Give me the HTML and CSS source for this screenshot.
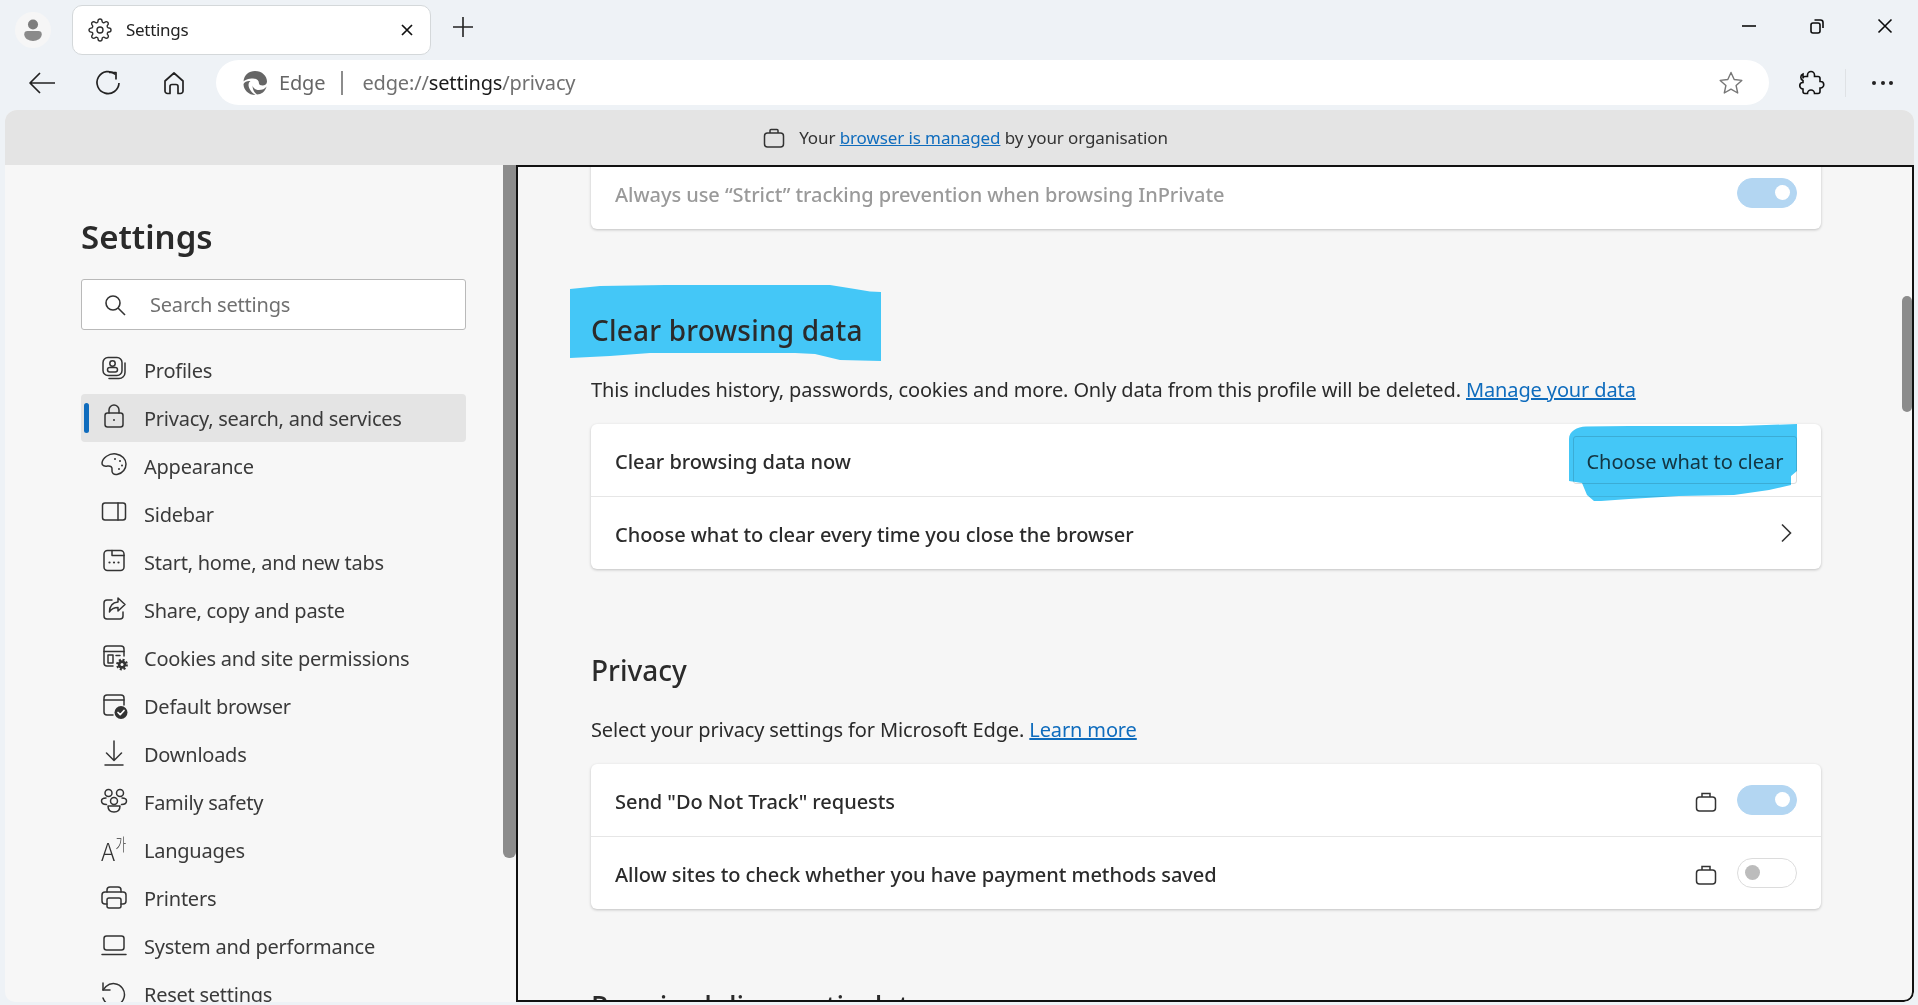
FILE: index.html
```html
<!DOCTYPE html>
<html lang="en">
<head>
  <meta charset="UTF-8">
  <title>Settings</title>
  <link rel="stylesheet" href="styles.css">
</head>
<body>
  <div class="tabstrip">
    <div class="avatar">
      <svg width="22" height="24" viewBox="0 0 20 22"><circle cx="10" cy="6" r="4.600" fill="#7d7d7d"/><path d="M2 15a3 3 0 0 1 3-3h10a3 3 0 0 1 3 3c0 4-4 6-8 6s-8-2-8-6z" fill="#8a8a8a"/></svg>
    </div>
    <div class="tab">
      <svg class="tab-gear" width="24" height="24" viewBox="0 0 24 24"><circle cx="12" cy="12" r="3"/><path d="M19.4 15a1.65 1.65 0 0 0 .33 1.82l.06.06a2 2 0 0 1 0 2.83 2 2 0 0 1-2.83 0l-.06-.06a1.65 1.65 0 0 0-1.82-.33 1.65 1.65 0 0 0-1 1.51V21a2 2 0 0 1-2 2 2 2 0 0 1-2-2v-.09A1.65 1.65 0 0 0 9 19.4a1.65 1.65 0 0 0-1.82.33l-.06.06a2 2 0 0 1-2.83 0 2 2 0 0 1 0-2.83l.06-.06a1.65 1.65 0 0 0 .33-1.82 1.65 1.65 0 0 0-1.51-1H3a2 2 0 0 1-2-2 2 2 0 0 1 2-2h.09A1.65 1.65 0 0 0 4.6 9a1.65 1.65 0 0 0-.33-1.82l-.06-.06a2 2 0 0 1 0-2.83 2 2 0 0 1 2.83 0l.06.06a1.65 1.65 0 0 0 1.82.33H9a1.65 1.65 0 0 0 1-1.51V3a2 2 0 0 1 2-2 2 2 0 0 1 2 2v.09a1.65 1.65 0 0 0 1 1.51 1.65 1.65 0 0 0 1.82-.33l.06-.06a2 2 0 0 1 2.83 0 2 2 0 0 1 0 2.83l-.06.06a1.65 1.65 0 0 0-.33 1.82V9a1.65 1.65 0 0 0 1.51 1H21a2 2 0 0 1 2 2 2 2 0 0 1-2 2h-.09a1.65 1.65 0 0 0-1.51 1z"/></svg>
      <span class="tab-title">Settings</span>
      <svg class="tab-close" width="12" height="12" viewBox="0 0 12 12"><path d="M1 1l10 10M11 1L1 11"/></svg>
    </div>
    <svg class="new-tab" width="24" height="24" viewBox="0 0 24 24"><path d="M12 2v20M2 12h20"/></svg>
    <div class="win-controls">
      <div class="win-btn"><svg width="16" height="16" viewBox="0 0 16 16"><path d="M1 8h14"/></svg></div>
      <div class="win-btn"><svg width="16" height="16" viewBox="0 0 16 16"><rect x="2" y="5" width="9" height="10" rx="2"/><path d="M5.500 2h6A2.500 2.500 0 0 1 14 4.500V10"/></svg></div>
      <div class="win-btn"><svg width="16" height="16" viewBox="0 0 16 16"><path d="M1.500 1.500l13 13M14.500 1.500l-13 13"/></svg></div>
    </div>
  </div>

  <div class="toolbar">
    <div class="nav-btn"><svg width="28" height="28" viewBox="0 0 28 28"><path d="M27 14H2M12 4L2 14l10 10"/></svg></div>
    <div class="nav-btn"><svg width="28" height="28" viewBox="0 0 28 28"><path d="M21.500 5.500A11 11 0 1 0 25 14"/><path d="M15 3.500h7v7"/></svg></div>
    <div class="nav-btn"><svg width="26" height="26" viewBox="0 0 26 26"><path d="M4 11l9-8 9 8v10a2.500 2.500 0 0 1-2.500 2.500H17v-7a2 2 0 0 0-2-2h-4a2 2 0 0 0-2 2v7H6.500A2.500 2.500 0 0 1 4 21z"/></svg></div>
    <div class="address">
      <svg class="edge-logo" width="24" height="24" viewBox="0 0 24 24"><path d="M.5 10.500C1 4 6 0 12 0c7 0 12 5 12 10.500 0 2.500-2 4-4.500 4-2 0-3.500-1-3.500-2 0-3-2.500-5-6-5-4.500 0-8.500 1.500-9.500 3z"/><path d="M.5 13c1-2.500 4.500-3.500 7-3-2.500 1.500-2.500 5-.5 8.500 1 2 3 4 5.500 5.500C5.500 24 .5 19 .5 13z"/><path d="M9.500 14.500c.5 2.500 3 4.500 6.500 4.500 3 0 6-1 7.500-3.500-1 5-5.500 8-9.500 8-3-2-4.500-5.500-4.500-9z"/></svg>
      <span class="addr-label">Edge</span>
      <span class="addr-sep"></span>
      <span class="addr-url">edge://<b>settings</b>/privacy</span>
      <svg class="star" width="26" height="26" viewBox="0 0 26 26"><path d="M13 2.500l3.200 7 7.600.9-5.700 5.100 1.600 7.500-6.700-3.800-6.700 3.800 1.600-7.500-5.700-5.100 7.600-.9z"/></svg>
    </div>
    <div class="toolbar-right">
      <svg class="puzzle" width="28" height="28" viewBox="0 0 28 28"><path d="M10.500 6a3.500 3.500 0 0 1 7 0v1.500H21a2 2 0 0 1 2 2v3h.5a3.200 3.200 0 0 1 0 6.500H23v3.500a2 2 0 0 1-2 2h-3.500a3.500 3.500 0 0 0-7 0H8a2 2 0 0 1-2-2v-2.500a3.200 3.200 0 0 1 0-6.500v-2a3.500 3.500 0 0 1 0-6.500V9.500a2 2 0 0 1 2-2h2.500z"/></svg>
      <span class="tool-sep"></span>
      <div class="dots"><i></i><i></i><i></i></div>
    </div>
  </div>

  <div class="window">
    <div class="banner">
      <svg class="case case-dark" width="22" height="22" viewBox="0 0 22 22"><rect x="1.500" y="6" width="19" height="14" rx="3"/><path d="M7 6V3.500A1 1 0 0 1 8 2.500h6a1 1 0 0 1 1 1V6"/></svg>
      <span>Your <a href="#">browser is managed</a> by your organisation</span>
    </div>
    <div class="content">
      <aside class="sidebar">
        <h2 class="side-title">Settings</h2>
        <div class="search">
          <svg width="24" height="24" viewBox="0 0 24 24"><circle cx="10" cy="10" r="7"/><path d="M15 15l7 7"/></svg>
          <span>Search settings</span>
        </div>
        <nav class="menu">
          <a class="menu-item"><svg class="ico" viewBox="0 0 28 28"><rect x="3" y="1.500" width="19" height="18" rx="5"/><circle cx="12.500" cy="7.500" r="2.700"/><rect x="7.500" y="11.500" width="10" height="4.500" rx="2.200"/><path d="M25 7v9.500a6 6 0 0 1-6 6H9"/></svg><span>Profiles</span></a>
          <a class="menu-item active"><svg class="ico" viewBox="0 0 28 28"><rect x="5" y="9" width="18" height="14" rx="2.500"/><path d="M9 9V6a5 5 0 0 1 10 0v3"/><circle cx="14" cy="16" r="1" class="solid"/></svg><span>Privacy, search, and services</span></a>
          <a class="menu-item"><svg class="ico" viewBox="0 0 28 28"><path d="M16 2C9 1 2.500 6 2 11c-.3 3 3 3.500 5.500 3 3-.5 5 1 4.500 4-.4 3 1.500 5 5 4.500 6-1 9-6 9-10.500C26 7 22 3 16 2z"/><circle cx="15" cy="7" r="1" class="solid"/><circle cx="20" cy="9" r="1" class="solid"/><circle cx="22" cy="13.500" r="1" class="solid"/><circle cx="19" cy="17" r="1" class="solid"/></svg><span>Appearance</span></a>
          <a class="menu-item"><svg class="ico" viewBox="0 0 28 28"><rect x="2.500" y="3" width="23" height="17" rx="2.500"/><path d="M18 3v17"/></svg><span>Sidebar</span></a>
          <a class="menu-item"><svg class="ico" viewBox="0 0 28 28"><rect x="4" y="2.500" width="20" height="20" rx="3.500"/><path d="M12 2.500V7.500h12"/><circle cx="9.500" cy="14.500" r="1.100" class="solid"/><circle cx="14" cy="14.500" r="1.100" class="solid"/><circle cx="18.500" cy="14.500" r="1.100" class="solid"/></svg><span>Start, home, and new tabs</span></a>
          <a class="menu-item"><svg class="ico" viewBox="0 0 28 28"><path d="M12 4H7a3 3 0 0 0-3 3v13a3 3 0 0 0 3 3h13a3 3 0 0 0 3-3v-4"/><path d="M18 2l7 6.500L18 15v-3.500c-4 0-6.500 1-8.500 4.500 0-6 3-9.500 8.500-10z"/></svg><span>Share, copy and paste</span></a>
          <a class="menu-item"><svg class="ico" viewBox="0 0 28 28"><path d="M13 22H7a3 3 0 0 1-3-3V5a3 3 0 0 1 3-3h14a3 3 0 0 1 3 3v7"/><path d="M4 7.500h20"/><rect x="8" y="11" width="5" height="8"/><path d="M16 11.500h4"/><circle cx="22" cy="20.500" r="4.800" class="cog" stroke-dasharray="2 1.770"/><circle cx="22" cy="20.500" r="4.200" class="solid"/><circle cx="22" cy="20.500" r="1.500" class="white"/></svg><span>Cookies and site permissions</span></a>
          <a class="menu-item"><svg class="ico" viewBox="0 0 28 28"><path d="M13 23H7a3 3 0 0 1-3-3V6a3 3 0 0 1 3-3h14a3 3 0 0 1 3 3v7"/><path d="M4 8h20"/><circle cx="21" cy="20.500" r="6.500" class="solid"/><path d="M18 20.500l2.200 2.200 3.800-4.200" class="white-line"/></svg><span>Default browser</span></a>
          <a class="menu-item"><svg class="ico" viewBox="0 0 28 28"><path d="M14 1v19M6.500 13l7.500 7.500 7.500-7.500M5 25h18"/></svg><span>Downloads</span></a>
          <a class="menu-item"><svg class="ico" viewBox="0 0 28 28"><circle cx="8.500" cy="5" r="3.500"/><circle cx="20" cy="5" r="3.500"/><circle cx="14" cy="13" r="3.500"/><path d="M6 10c-3 0-4.500 1.500-4.500 3 0 2 2 3.500 5 3.500M22 10c3 0 4.500 1.500 4.500 3 0 2-2 3.500-5 3.500M8 18h12c0 4-2.500 6-6 6s-6-2-6-6z"/></svg><span>Family safety</span></a>
          <a class="menu-item"><svg class="ico" viewBox="0 0 28 28"><text x="1" y="25" class="ico-a">A</text><text transform="translate(15.500 15) scale(.68 1)" class="ico-k">가</text></svg><span>Languages</span></a>
          <a class="menu-item"><svg class="ico" viewBox="0 0 28 28"><path d="M7 8V6a3 3 0 0 1 3-3h8a3 3 0 0 1 3 3v2"/><path d="M7 20H5a3 3 0 0 1-3-3v-6a3 3 0 0 1 3-3h18a3 3 0 0 1 3 3v6a3 3 0 0 1-3 3h-2"/><rect x="7" y="14" width="14" height="10" rx="2"/></svg><span>Printers</span></a>
          <a class="menu-item"><svg class="ico" viewBox="0 0 28 28"><rect x="4" y="4" width="20" height="14" rx="2.500"/><path d="M2 22.500h24"/></svg><span>System and performance</span></a>
          <a class="menu-item"><svg class="ico" viewBox="0 0 28 28"><path d="M3 18a11 11 0 1 0 3-11.500L3 10"/><path d="M3 3v7h7"/></svg><span>Reset settings</span></a>
        </nav>
      </aside>
      <div class="side-scroll"><div class="side-thumb"></div></div>

      <main class="main">
        <div class="main-thumb"></div>
        <div class="card card-first">
          <div class="row">
            <span class="disabled">Always use “Strict” tracking prevention when browsing InPrivate</span>
            <div class="toggle on"></div>
          </div>
        </div>

        <div class="hl-wrap">
          <svg class="hl-heading" width="311" height="76" viewBox="0 0 311 76"><path d="M0 4L30 1L95 0H260L285 4L300 6.500L311 7V76L270 75L245 69L225 68H80L40 71L0 73z"/></svg>
          <h1 class="section-big">Clear browsing data</h1>
        </div>
        <p class="desc desc-first">This includes history, passwords, cookies and more. Only data from this profile will be deleted. <a href="#">Manage your data</a></p>
        <div class="card">
          <div class="row">
            <span>Clear browsing data now</span>
            <button class="btn">Choose what to clear</button>
          </div>
          <div class="row row-line">
            <span>Choose what to clear every time you close the browser</span>
            <svg class="chevron" width="12" height="20" viewBox="0 0 12 20"><path d="M2 1.500l8.500 8.500L2 18.500"/></svg>
          </div>
          <svg class="hl-button" width="228" height="78" viewBox="0 0 228 78"><path d="M0 15C0 7 8 3 17 2.500L60 2H170L228 0V47L222 52V61L200 66L165 71L110 72L60 75L32 77L25 77L18 71L13 59L0 57z"/></svg>
        </div>

        <h2 class="section">Privacy</h2>
        <p class="desc">Select your privacy settings for Microsoft Edge. <a href="#">Learn more</a></p>
        <div class="card">
          <div class="row">
            <span>Send "Do Not Track" requests</span>
            <svg class="case" width="22" height="22" viewBox="0 0 22 22"><rect x="1.500" y="6" width="19" height="14" rx="3"/><path d="M7 6V2.500h8V6"/></svg>
            <div class="toggle on"></div>
          </div>
          <div class="row row-line">
            <span>Allow sites to check whether you have payment methods saved</span>
            <svg class="case" width="22" height="22" viewBox="0 0 22 22"><rect x="1.500" y="6" width="19" height="14" rx="3"/><path d="M7 6V2.500h8V6"/></svg>
            <div class="toggle"></div>
          </div>
        </div>

        <h2 class="section section-last">Required diagnostic data</h2>
      </main>
    </div>
  </div>
</body>
</html>
```

FILE: styles.css
```css
* { box-sizing: border-box; }
html, body { height: 100%; }
body { margin: 0; background: #eef2f6; color: #2b2b2b; font-family: "Noto Sans", "Open Sans", sans-serif; display: flex; flex-direction: column; overflow: hidden; }
a { color: #0f6cbd; text-decoration: underline; }
svg { display: block; flex: none; fill: none; }

/* title bar */
.tabstrip { height: 60px; display: flex; align-items: center; flex: none; }
.avatar { width: 36px; height: 36px; margin-left: 15px; border-radius: 50%; background: #f6f6f6; display: flex; align-items: center; justify-content: center; }
.tab { width: 359px; height: 50px; margin-left: 21px; background: #fff; border: 1px solid #d4d8da; border-radius: 10px; display: flex; align-items: center; padding: 0 17px 0 15px; }
.tab-gear { stroke: #2e2e2e; stroke-width: 1.4; }
.tab-title { font-size: 17px; margin: 0 0 2px 14px; letter-spacing: -.3px; color: #222; }
.tab-close { margin-left: auto; stroke: #111; stroke-width: 1.7; }
.new-tab { margin-left: 20px; margin-bottom: 6px; stroke: #222; stroke-width: 1.6; }
.win-controls { margin-left: auto; margin-right: -1px; display: flex; margin-bottom: 8px; }
.win-btn { width: 68px; display: flex; justify-content: center; }
.win-btn svg { stroke: #0c0c0c; stroke-width: 1.6; }

/* toolbar */
.toolbar { height: 50px; display: flex; padding-left: 9px; flex: none; }
.nav-btn { width: 66px; height: 45px; display: flex; align-items: center; justify-content: center; }
.nav-btn svg { stroke: #222; stroke-width: 1.7; stroke-linejoin: round; }
.address { flex: 1; height: 45px; margin-left: 9px; background: #fff; border-radius: 23px; display: flex; align-items: center; padding: 0 25px 0 27px; font-size: 20px; letter-spacing: -.15px; }
.edge-logo { fill: #666; }
.addr-label { margin-left: 12px; color: #666; }
.addr-sep { width: 2px; height: 24px; background: #8c8c8c; margin: 0 19px 0 16px; }
.addr-url { color: #707070; }
.addr-url b { font-weight: 400; color: #1a1a1a; }
.star { margin-left: auto; stroke: #777; stroke-width: 1.4; stroke-linejoin: round; }
.toolbar-right { width: 149px; height: 45px; display: flex; align-items: center; padding-left: 28px; }
.puzzle { stroke: #111; stroke-width: 1.6; }
.tool-sep { width: 1px; height: 28px; background: #dfe2e5; margin: 0 26px 0 20px; }
.dots { display: flex; gap: 4.5px; }
.dots i { width: 4px; height: 4px; border-radius: 50%; background: #222; }

/* window */
.window { flex: 1; margin: 0 4px 3px 5px; background: #f7f7f7; border-radius: 12px 12px 10px 10px; display: flex; flex-direction: column; overflow: hidden; min-height: 0; }
.banner { height: 55px; flex: none; background: #e4e4e4; display: flex; align-items: center; justify-content: center; gap: 14px; font-size: 17px; letter-spacing: -.1px; color: #333; padding-left: 12px; }
.case { stroke: #333; stroke-width: 1.5; margin-right: 20px; margin-top: 4px; }
.case-dark { margin: 0; }
.content { flex: 1; display: flex; min-height: 0; }

/* sidebar */
.sidebar { width: 498px; padding: 50px 37px 0 76px; overflow: hidden; }
.side-title { margin: 0; font-size: 33px; line-height: 44px; font-weight: 600; color: #2a2a2a; }
.search { height: 51px; margin-top: 20px; background: #fff; border: 1px solid #b9b9b9; border-radius: 3px; display: flex; align-items: center; padding-left: 21px; gap: 23px; font-size: 20px; letter-spacing: -.2px; color: #707070; }
.search svg { stroke: #333; stroke-width: 1.6; }
.menu { margin-top: 16px; }
.menu-item { height: 48px; display: flex; align-items: center; position: relative; padding-left: 19px; gap: 16px; font-size: 20px; letter-spacing: -.25px; color: #3a3a3a; text-decoration: none; border-radius: 4px; }
.menu-item.active { background: #e4e4e4; }
.menu-item.active::before { content: ""; position: absolute; left: 3px; top: 9px; width: 5px; height: 30px; border-radius: 3px; background: #0f6cbd; }
.ico { width: 28px; height: 28px; overflow: visible; stroke: #333; stroke-width: 1.5; stroke-linecap: round; stroke-linejoin: round; }
.ico .solid { fill: #333; stroke: none; }
.ico .white { fill: #fff; stroke: none; }
.ico .white-line { stroke: #fff; stroke-width: 1.7; }
.ico .cog { stroke-width: 2.2; stroke-linecap: butt; }
.ico text { fill: #333; stroke: none; font-family: "Noto Sans CJK KR", sans-serif; font-weight: 300; }
.ico-a { font-size: 24px; }
.ico-k { font-size: 17px; }
.side-scroll { width: 13px; flex: none; }
.side-thumb { height: 693px; background: #8c8c8c; border-radius: 0 0 6px 6px; }

/* main panel */
.main { flex: 1; min-width: 0; position: relative; background: #f6f6f6; border: 2px solid #111; border-radius: 0 0 10px 0; padding-left: 73px; overflow: hidden; }
.main-thumb { position: absolute; right: 0; top: 129px; width: 10px; height: 116px; border-radius: 5px; background: #8c8c8c; }
.card { width: 1230px; background: #fff; border-radius: 6px; box-shadow: 0 1px 3px rgba(0,0,0,.22); position: relative; font-size: 20px; font-weight: 500; letter-spacing: -.05px; }
.card-first { margin-top: -10px; }
.row { height: 72px; display: flex; align-items: center; padding: 0 24px 0 24px; }
.row > span { margin-right: auto; margin-top: 3px; }
.row-line { height: 73px; border-top: 1px solid #e6e6e6; }
.disabled { color: #9a9a9a; }
.toggle { width: 60px; height: 30px; flex: none; border-radius: 15px; border: 1px solid #dcdcdc; background: #fff; position: relative; }
.toggle::after { content: ""; position: absolute; left: 7px; top: 6px; width: 15px; height: 15px; border-radius: 50%; background: #bcbcbc; }
.toggle.on { background: #b3d6f2; border-color: #b3d6f2; }
.toggle.on::after { left: auto; right: 6px; background: #fff; }
.btn { width: 224px; height: 48px; padding: 2px 0 0; background: #fff; border: 1px solid #dcdcdc; border-radius: 3px; font: inherit; font-weight: 400; color: #454545; }
.chevron { stroke: #333; stroke-width: 1.6; margin-right: 5px; }
.hl-wrap { position: relative; z-index: 0; margin-top: 81px; }
.hl-heading { position: absolute; left: -21px; top: -25px; z-index: -1; fill: #44c7f7; }
.section-big { margin: 0; font-size: 28px; line-height: 40px; font-weight: 500; letter-spacing: .2px; }
.section { margin: 83px 0 0; font-size: 28px; line-height: 36px; font-weight: 500; }
.section-last { margin-top: 79px; }
.desc { margin: 28px 0 20px; font-size: 20px; line-height: 28px; letter-spacing: -.13px; }
.desc-first { margin-top: 26px; }
.hl-button { position: absolute; left: 978px; top: 0; fill: #44c7f7; mix-blend-mode: multiply; }
```
